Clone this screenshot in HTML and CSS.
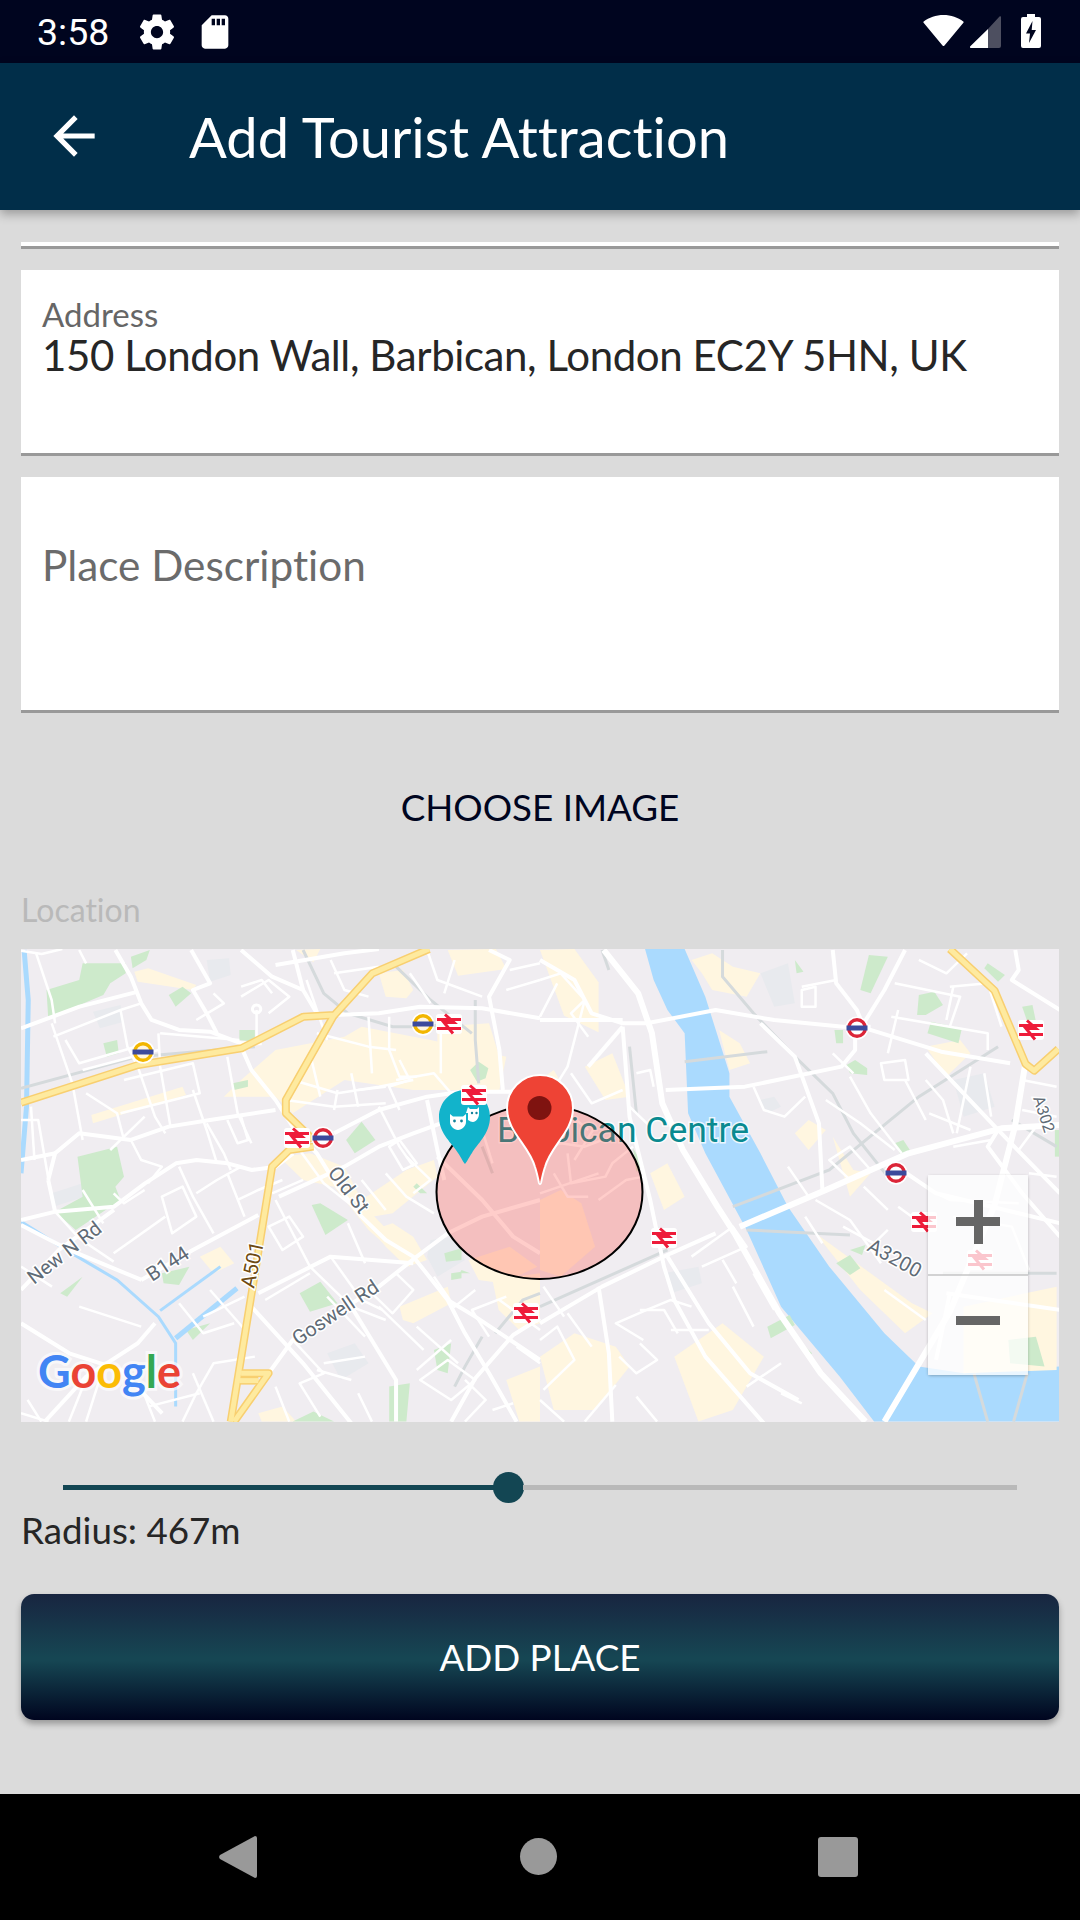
FILE: index.html
```html
<!DOCTYPE html>
<html lang="en">
<head>
<meta charset="utf-8">
<title>Add Tourist Attraction</title>
<link rel="stylesheet" href="styles.css">
</head>
<body>
<div class="phone">
  <header class="status">
    <div class="status-left">
      <span class="time">3:58</span>
      <svg class="ico-gear" viewBox="0 0 24 24"><path d="M19.43 12.98c.04-.32.07-.64.07-.98s-.03-.66-.07-.98l2.11-1.65c.19-.15.24-.42.12-.64l-2-3.46c-.12-.22-.39-.3-.61-.22l-2.49 1c-.52-.4-1.08-.73-1.69-.98l-.38-2.65C14.46 2.18 14.25 2 14 2h-4c-.25 0-.46.18-.49.42l-.38 2.65c-.61.25-1.17.59-1.69.98l-2.49-1c-.23-.09-.49 0-.61.22l-2 3.46c-.13.22-.07.49.12.64l2.11 1.65c-.04.32-.07.65-.07.98s.03.66.07.98l-2.11 1.65c-.19.15-.24.42-.12.64l2 3.46c.12.22.39.3.61.22l2.49-1c.52.4 1.08.73 1.69.98l.38 2.65c.03.24.24.42.49.42h4c.25 0 .46-.18.49-.42l.38-2.65c.61-.25 1.17-.59 1.69-.98l2.49 1c.23.09.49 0 .61-.22l2-3.46c.12-.22.07-.49-.12-.64l-2.11-1.65zM12 15.5c-1.93 0-3.5-1.57-3.5-3.5s1.57-3.5 3.5-3.5 3.5 1.57 3.5 3.5-1.57 3.5-3.5 3.5z"/></svg>
      <svg class="ico-sd" viewBox="0 0 24 24"><path d="M18 2h-8L4.02 8 4 20c0 1.1.9 2 2 2h12c1.1 0 2-.9 2-2V4c0-1.1-.9-2-2-2zm-6 6h-2V4h2v4zm3 0h-2V4h2v4zm3 0h-2V4h2v4z"/></svg>
    </div>
    <div class="status-right">
      <svg class="ico-wifi" viewBox="0 0 41 31"><path d="M19.500 30.500L.6 7.800a1 1 0 0 1 .1-1.300C6 2.500 13 0 20.500 0s14.500 2.500 19.800 6.500a1 1 0 0 1 .1 1.300L21.500 30.500a1.300 1.300 0 0 1-2 0z"/></svg>
      <svg class="ico-signal" viewBox="0 0 31 32"><path class="dim" d="M31 1v29a2 2 0 0 1-2 2H18V13L29.500.5A.9.9 0 0 1 31 1z"/><path d="M18 13v19H1a1 1 0 0 1-.7-1.700z"/></svg>
      <svg class="ico-batt" viewBox="0 0 20 34"><path d="M6 0h8v3h4a2 2 0 0 1 2 2v27a2 2 0 0 1-2 2H2a2 2 0 0 1-2-2V5a2 2 0 0 1 2-2h4z"/><path class="cut" d="M11.500 7L5 19.500h4L8 29l7-13h-4.300z"/></svg>
    </div>
  </header>

  <div class="appbar">
    <svg class="ico-back" viewBox="0 0 24 24"><path d="M20 11H7.830l5.590-5.590L12 4l-8 8 8 8 1.410-1.410L7.830 13H20v-2z"/></svg>
    <h1 class="title">Add Tourist Attraction</h1>
  </div>

  <main class="content">
    <div class="field-stub"></div>
    <div class="field field-address">
      <div class="field-label">Address</div>
      <div class="field-value">150 London Wall, Barbican, London EC2Y 5HN, UK</div>
    </div>
    <div class="field field-desc">
      <div class="placeholder">Place Description</div>
    </div>
    <div class="choose">CHOOSE IMAGE</div>
    <div class="loc-label">Location</div>

    <div class="map">
      <svg class="map-svg" viewBox="21 949 1038 473">
        <defs>
          <g id="rail">
            <rect x="-13" y="-10" width="26" height="20" rx="3" class="halo"/>
            <path class="rail-mark" d="M-12-4.500H12M-12 4.500H12M-4-9.500L5-1.500H-5L4 9.500"/>
          </g>
          <g id="tube-y">
            <circle r="11.500" class="halo"/>
            <circle r="8.300" class="tube-ring-y"/>
            <rect x="-10.500" y="-2.500" width="21" height="5" class="tube-bar"/>
          </g>
          <g id="tube-r">
            <circle r="11.500" class="halo"/>
            <circle r="8.300" class="tube-ring-r"/>
            <rect x="-10.500" y="-2.500" width="21" height="5" class="tube-bar"/>
          </g>
        </defs>
        <rect x="21" y="949" width="1038" height="473" class="m-bg"/>

        <!-- left half, authored in crop coordinates -->
        <g transform="translate(0 940) scale(.3444 .3333)">
          <g class="m-cream">
            <path d="M1100 100l70-10 30 60-20 25-60-5z"/>
            <path d="M390 95l40-10 140 50-10 15-160-25z"/>
            <path d="M265 525l265-85 10 25-270 85z"/>
            <path d="M650 470l50-50 100-90 200-40 50-30 200 40 220 50-20 100-250 0-200-30-150 100-50-50z"/>
            <path d="M1160 1100l140-60 10 50-110 60-30-10z"/>
            <path d="M810 650l90-10 100 40 60 120 140 150-10 30-120-110-100-130-90-20z"/>
            <path d="M1300 30l140-3 30 60-140 20z"/>
            <path d="M1270 260l150-10 30 100-180 30z"/>
            <path d="M860 30l70-3-20 40z"/>
            <path d="M1430 1020l138-20v150l-60 20-60-60z"/>
            <path d="M1470 1320l98-40v165h-60z"/>
            <path d="M1080 870l60-20 60 40 40 70-60 20-60-60z"/>
            <path d="M1050 780l130-90 80-30 10 50-130 110-60 10z"/>
            <path d="M580 950l60-30 40 50-60 30z"/>
            <path d="M1360 960l120-40 80 60-100 50-70-10z"/>
            <path d="M750 1420l70-20 40 45h-100z"/>
          </g>
          <g class="m-grey">
            <path d="M600 60l65-5 5 50-60 20z"/>
            <path d="M270 215l80-20 10 50-70 20z"/>
            <path d="M1250 900l70-10 30 70-80 50-30-60z"/>
            <path d="M950 1240l80-30 40 60-80 50z"/>
            <path d="M150 760l90-30 5 40-90 30z"/>
          </g>
          <g class="m-park">
            <path d="M135 150l95-30 10-50h125v30l-45 30-20 35-160 70z"/>
            <path d="M380 50l55-20-10 30-40 25z"/>
            <path d="M225 650l115-30 20 90-25 30 15 40-130 90-60-55 80-45z"/>
            <path d="M490 165l40-25 25 20-45 40z"/>
            <path d="M300 310l40-10 5 40-35 10z"/>
            <path d="M905 795l25-5 80 50-65 45z"/>
            <path d="M1005 600l45-55 40 55-60 40z"/>
            <path d="M870 1060l60-35 50 65-80 25z"/>
            <path d="M1290 940l50-15v35l-45 5z"/>
            <path d="M1260 1230l50-20-10 90-30-10z"/>
            <path d="M1130 1340l60-10-10 115h-50z"/>
            <path d="M1365 390l25-25 28 20-8 30-25 10z"/>
            <path d="M175 1060l65-50-45 60z"/>
            <path d="M540 1170l70-20-50 50z"/>
            <path d="M695 270h45v35l-45-5z"/>
            <path d="M675 430l45-10v20l-40 10z"/>
            <path d="M470 1000l80-20-30 55-45-5z"/>
            <path d="M1310 1000l30-5v20l-30 5z"/>
            <path d="M1340 990l25 10-30 0z"/>
            <path d="M1210 730l30 30-20 0-20-20z"/>
            <path d="M850 1445l60-30 60 30z"/>
          </g>
          <g class="m-water">
            <path d="M61 845L200 935l140 85 120 110 50 80v190"/>
            <path d="M465 1112L640 980"/>
            <path class="wide" d="M510 1195l178-150"/>
            <path class="wide" d="M70 30l12 150-5 320-16 200"/>
          </g>
          <g class="m-rail-line">
            <path d="M61 445L400 350l340-30"/>
            <path d="M880 30l60 130 70 60 130 40h80l120-10"/>
            <path d="M1380 180v120l10 130"/>
            <path d="M1150 80l100 100 120 100"/>
            <path d="M1400 1190l-50 90-30 60"/>
            <path d="M1568 1060l-50 20-80 100"/>
            <path d="M1430 700l-30-80"/>
          </g>
          <g class="m-road">
            <path d="M61 265l170-65 170-45"/>
            <path d="M335 30l45 80 30 80 30 50 80 30 90 5 90 35h60"/>
            <path d="M555 30l55 100-50 20 40 70 30 60"/>
            <path d="M700 30l90 80 90 40 40 70"/>
            <path d="M850 30l30 120"/>
            <path d="M800 75l200-35 100-13"/>
            <path d="M970 225l130-5 120-20 180 5 168 30"/>
            <path d="M700 320l30 70 70 90 50 80 70 80 60 100 70 90 70 70 80 50 100 130 50 100 70 120 80 145"/>
            <path d="M970 580l130-70 140-40 100-15h228"/>
            <path d="M140 720l20-80 70-60 150 20 110-40 120-20 190-30"/>
            <path d="M61 660l100-20"/>
            <path d="M160 815l-20-95"/>
            <path d="M61 840l100-25 170-15 90-70 90-60 60-10 90 10 70 20 70-10 50-40"/>
            <path d="M810 770l190-90 100-60 100-40 80-30"/>
            <path d="M61 1050l110-120 160-120"/>
            <path d="M61 855l140 75 210 90"/>
            <path d="M410 1020l150-90 190-105"/>
            <path d="M61 1150l140 90 150 50 120 130"/>
            <path d="M750 1060l210-110 240 20"/>
            <path d="M780 1300l70-100 250-160 110-90 90-70 100-50 168-50"/>
            <path d="M1020 1100l130 220v125"/>
            <path d="M1240 480l30 150 20 90"/>
            <path d="M1420 30l60 30-60 110 30 160 10 120"/>
            <path d="M1300 1080l80 50 188 130"/>
            <path d="M1310 1445l70-130 110-130 78-50"/>
            <path d="M730 1100l150 170 140 180"/>
            <path d="M450 1150l-50 60-150 100-120 135"/>
            <path d="M1270 650l130 130 90 110 78 50"/>
          </g>
          <g class="m-road thin">
            <path d="M105 40l45 140 10 70"/>
            <path d="M61 32l60 10 60-15"/>
            <path d="M230 30l20 40"/>
            <path d="M150 250l30 90 30 90 30 170"/>
            <path d="M190 300l40 70 200-60"/>
            <path d="M155 290l195-80 60-20"/>
            <path d="M350 210l20 110 30 60 50 150 30 50"/>
            <path d="M460 280l5 100 30 180"/>
            <path d="M465 280l230 20"/>
            <path d="M240 390l220-60"/>
            <path d="M620 160l30 30-80 50"/>
            <path d="M700 170l80-50 60 50-60 50"/>
            <path d="M745 210v90"/>
            <path d="M660 350l30 170 40 90"/>
            <path d="M360 420l200-50 20 90-230 60"/>
            <path d="M560 450l40 120 30 100"/>
            <path d="M660 540l30 70 30-10-20-70"/>
            <path d="M600 550l50 90 20 50"/>
            <path d="M830 480l140 20 150-10"/>
            <path d="M850 420l130 40 120-20 100-20"/>
            <path d="M900 340l30 130"/>
            <path d="M980 450l-10 60"/>
            <path d="M1020 400l20 100"/>
            <path d="M1070 230l10 170"/>
            <path d="M1130 230v100l30 80 50 0"/>
            <path d="M1150 330l-80-10-150-40"/>
            <path d="M1100 500l60 120 40 60"/>
            <path d="M1130 620l30-20 50 70-40 20z"/>
            <path d="M380 600l30 60 60 20-40 50"/>
            <path d="M520 680l40 90 60 110"/>
            <path d="M470 770l30 110 70-50-40-90z"/>
            <path d="M570 760l60-40 70-40"/>
            <path d="M660 700l50 130"/>
            <path d="M690 780l60-30 70-30"/>
            <path d="M160 815l70 80 100 70"/>
            <path d="M330 760l30 30 60-40"/>
            <path d="M330 940l150-110"/>
            <path d="M800 780l100 200 120 120 100 40"/>
            <path d="M900 1000l-130 80"/>
            <path d="M1010 850l50 120"/>
            <path d="M960 950l90 130 60 30"/>
            <path d="M780 860l60-30 40 60-60 40z"/>
            <path d="M850 1200l90 100-70 30 60 100"/>
            <path d="M1060 1250l-120 20"/>
            <path d="M1150 1000l50 50-60 70-60-60"/>
            <path d="M1220 1320l80-60 80 60-70 60z"/>
            <path d="M1260 1010l60 90 60-50"/>
            <path d="M1420 1190l-50-80 100-40"/>
            <path d="M1430 1410l60-20"/>
            <path d="M1160 360l30 60-60 20 30 70"/>
            <path d="M1040 450l80-10"/>
            <path d="M1280 270v130"/>
            <path d="M1350 1320l60 60-60 65"/>
            <path d="M590 1130l120-60"/>
            <path d="M740 1250l-120 20-50 90-40 85"/>
            <path d="M410 1340l40 105"/>
            <path d="M250 1445l40-130"/>
            <path d="M80 1380l40 65"/>
            <path d="M61 1420l80 25"/>
            <path d="M1180 650l70 70-50 40"/>
            <path d="M890 120l60 180"/>
            <path d="M960 60l40 90 70 20"/>
            <path d="M970 100l130-20"/>
            <path d="M700 140l60-20 30 40"/>
            <path d="M1190 100l60 90"/>
            <path d="M1240 30l30 90 130 50"/>
            <path d="M1320 60l-30 100"/>
            <path d="M1480 90l88-20"/>
            <path d="M1470 150l98-30"/>
            <path d="M1150 420l110-20 50 60"/>
            <path d="M1280 500l120 70 30 100"/>
            <path d="M1300 600l100-20"/>
            <path d="M1120 700l60 70 80 50"/>
            <path d="M1050 720l70 90"/>
            <path d="M870 630l70 100 110 90"/>
            <path d="M880 720l-90 40"/>
            <path d="M950 1070l110 120"/>
            <path d="M1210 1160l120 110"/>
            <path d="M1100 1100l130 130"/>
            <path d="M1310 1200l-100 90"/>
            <path d="M1450 1080l118 90"/>
            <path d="M1500 1220l68 50"/>
            <path d="M520 1090l70 90 90-30"/>
            <path d="M610 1050l110 130"/>
            <path d="M230 1100l180 60"/>
            <path d="M61 980l90 60"/>
            <path d="M260 1290l-60 155"/>
            <path d="M560 1300l60 145"/>
            <path d="M430 1400l150-40"/>
            <path d="M800 1340l40 105"/>
            <path d="M920 1290l100 30"/>
            <path d="M1040 1360l40 85"/>
            <path d="M240 750l60 100"/>
            <path d="M420 530l-100 100"/>
            <path d="M250 460l90 60 20 80"/>
            <path d="M61 540h50l30 180"/>
            <path d="M90 500l10 160"/>
          </g>
          <g class="m-hwy-under">
            <path d="M61 488l340-113 300-50 180-95 90-5 110-125 165-73"/>
            <path d="M970 225L830 480v40l80 80"/>
            <path d="M910 620l-70 10-50 50-50 320-70 445"/>
            <path d="M700 1300h80l-100 145"/>
            <path d="M695 1322h55"/>
          </g>
          <g class="m-hwy">
            <path d="M61 488l340-113 300-50 180-95 90-5 110-125 165-73"/>
            <path d="M970 225L830 480v40l80 80"/>
            <path d="M910 620l-70 10-50 50-50 320-70 445"/>
            <path d="M700 1300h80l-100 145"/>
            <path d="M695 1322h55"/>
          </g>
          <path class="m-halo-road" d="M745 195a12 12 0 1 0 .1 0z"/>
        </g>

        <!-- right half -->
        <g transform="translate(540 940) scale(.3444 .3333)">
          <path class="m-river" d="M305 27H420l60 143 70 230v70l90 170 80 160 120 180 160 200 100 100 130 20 277-20V1445H970L870 1310 700 1100 600 870 480 640 430 520 420 280 370 210 330 120z"/>
          <g class="m-cream">
            <path d="M440 60l60-20 60 40 80 20-40 70-100-20-30-50z"/>
            <path d="M520 270l60 40 30 60-60 20z"/>
            <path d="M740 580l40-40 50 30-50 60z"/>
            <path d="M0 30l100-3 70 100 0 150-100-50z"/>
            <path d="M130 380l80-40 50 130-70 10z"/>
            <path d="M0 780l60-30 60 40 40 130-100 90-60-20z"/>
            <path d="M320 700l50-30 50 100-60 40z"/>
            <path d="M800 880l120 90 160 120 60 30-80 60-130-130z"/>
            <path d="M0 1250l100-70 120 40 40 60-100 130H40z"/>
            <path d="M390 1250l140-100 120 100-90 160-100 35z"/>
            <path d="M850 590l60 100 50 10-60 70z"/>
            <path d="M1120 320l100-20 30 40-70 70z"/>
            <path d="M1230 1100l270-60v250l-270 10z"/>
            <path d="M0 420l40-30 50 90z"/>
          </g>
          <g class="m-grey">
            <path d="M640 100l80-30 20 120-60 10z"/>
            <path d="M1200 420l90-20 30 100-90 30z"/>
            <path d="M360 1000l100-20 10 50-90 30z"/>
            <path d="M640 480l40-10 20 30-40 20z"/>
          </g>
          <g class="m-park">
            <path d="M955 45l55 5-50 110-30-10z"/>
            <path d="M1100 165l45-10 25 40-50 30-25 0z"/>
            <path d="M1135 245l90 20-10 45-90-30z"/>
            <path d="M890 375l25-15 35 25v20l-50-5z"/>
            <path d="M1030 610l25-10 25 40-30 10z"/>
            <path d="M660 1160l65-35 15 30-70 40z"/>
            <path d="M860 970l40-25 30 40-30 20z"/>
            <path d="M900 930l45-15-10 30z"/>
            <path d="M740 60l25 35-20 5z"/>
            <path d="M740 1190l50 50-10 10-40-50z"/>
            <path d="M1400 200l30-5 10 50-25 0z"/>
            <path d="M1300 70l50 35-20 20-40-40z"/>
            <path d="M1360 1200l80-10 25 90-100-10z"/>
            <path d="M270 625l30 50-20 20z"/>
            <path d="M1495 570h12v80h-12z"/>
            <path d="M855 270l25 0 0 40-20 0z"/>
          </g>
          <g class="m-rail-line">
            <path d="M530 30v80l90 110 120 130 110 110 60 120 100 130"/>
            <path d="M560 800L840 690l260-220 230-150"/>
            <path d="M420 365l240-30"/>
            <path d="M600 870l300 15"/>
            <path d="M1370 540l130 80"/>
            <path d="M180 30l20 60"/>
            <path d="M260 320l20 200"/>
            <path d="M0 1100L370 930"/>
            <path d="M1170 1000h330"/>
            <path d="M1260 1300l40 145M1415 1300l-40 145"/>
          </g>
          <g class="m-road">
            <path d="M0 60l100 60 50 100 90 30 70 0 200-40 170 30 200 20h80"/>
            <path class="wide" d="M185 30l100 130 40 120 30 210 60 140 100 170 50 80 130 240 120 180 130 145"/>
            <path d="M240 260l20 270 60 250 40 200 30 100 90 170 170 200"/>
            <path d="M0 240h240"/>
            <path d="M140 380L240 260"/>
            <path d="M365 450l230-10 280-60 40-50 0-50"/>
            <path class="wide" d="M580 860l250-110 240-110 270-75 170-10"/>
            <path class="wide" d="M1000 1445l190-330 130-320 60-240 30-190"/>
            <path d="M945 265l220 70 200 35"/>
            <path d="M1120 340l210 230 180 190"/>
            <path d="M1330 570l-30 50 100 140 110 130"/>
            <path d="M1050 690l100 70 360 90"/>
            <path d="M1180 1060l330 50"/>
            <path d="M640 250l100 100 70 200 10 200"/>
            <path d="M0 1150l180-110 200-100 130-60"/>
            <path d="M170 1040l30 200 10 205"/>
            <path d="M370 950l120 200 120 150 140 80"/>
            <path d="M1190 1060l-40 200"/>
            <path d="M850 30l10 100 60 80 20 50"/>
            <path d="M1060 30l-60 120-60 100"/>
            <path d="M1380 30l10 60-20 30 140 90"/>
          </g>
          <g class="m-road thin">
            <path d="M0 120l60-20 70 80-40 40 50 70"/>
            <path d="M130 180l-50 200-60 100"/>
            <path d="M760 150l40-10v60h-40z"/>
            <path d="M860 120l-100 20"/>
            <path d="M1030 130l190 40-30 90"/>
            <path d="M1190 140l110-10 40 130"/>
            <path d="M1040 210l-30 130"/>
            <path d="M1020 230l280 50 0 50"/>
            <path d="M990 370l70-10 10 60-70 0z"/>
            <path d="M1120 420l50 60 30 100"/>
            <path d="M900 410l60 110 90 120"/>
            <path d="M830 480l100 70 100 80"/>
            <path d="M840 660l60-40 60 70-60 30z"/>
            <path d="M800 780l100 60 90 130"/>
            <path d="M620 440l30 70 60 20 60-60"/>
            <path d="M1200 620l110-20"/>
            <path d="M1250 380l-40 200"/>
            <path d="M1400 420l100 20"/>
            <path d="M1400 510l100 20"/>
            <path d="M440 950l120-90 40 60-130 60"/>
            <path d="M530 960l40 70"/>
            <path d="M440 1100l-60-20-70 30-90 40 80 50"/>
            <path d="M290 1110l70 0 40 70"/>
            <path d="M0 1200l50-40 50 100-90 90"/>
            <path d="M290 1210l50 50-60 40-50-50"/>
            <path d="M600 1340l100-70"/>
            <path d="M700 1360l60 30"/>
            <path d="M130 1445l90-110"/>
            <path d="M380 1170l110 0"/>
            <path d="M170 780l80-60 50-10"/>
            <path d="M80 640l10 90 100-20 20-40 60-50"/>
            <path d="M0 760l170-60"/>
            <path d="M0 630l60-20 70 10 50-20"/>
            <path d="M40 700l40 70 60 0"/>
            <path d="M280 400l40-10 10 50"/>
            <path d="M1130 750l60 30 200 10"/>
            <path d="M1200 830l170 30 50 130"/>
            <path d="M1000 1050l120 90"/>
            <path d="M850 340l60 60"/>
            <path d="M0 230l50-100"/>
            <path d="M90 400l60 90 90-40"/>
            <path d="M60 500l80 70"/>
            <path d="M160 560l-60 100"/>
            <path d="M260 500l60 60"/>
            <path d="M10 1040l60 90"/>
            <path d="M80 1120l70 100"/>
            <path d="M0 1380l70 65"/>
            <path d="M280 1370l60 75"/>
            <path d="M1130 520l120 50"/>
            <path d="M1060 420l60 120"/>
            <path d="M1200 140l-20 100"/>
            <path d="M1100 60l80 40 60-60"/>
            <path d="M880 860l90 50 40-40"/>
            <path d="M720 680l60 90"/>
            <path d="M770 830l50 80"/>
            <path d="M940 740l70 70"/>
            <path d="M1040 800l80 60"/>
            <path d="M1290 400l20 130"/>
            <path d="M1440 560l-50 70"/>
            <path d="M1420 700l80 10"/>
            <path d="M560 1040l60 120"/>
            <path d="M620 1000l60 110"/>
          </g>
          <g class="m-hwy-under"><path d="M1190 27l130 125 90 220 25 20 70-65"/></g>
          <g class="m-hwy"><path d="M1190 27l130 125 90 220 25 20 70-65"/></g>
        </g>

        <use href="#tube-y" x="143" y="1052"/>
        <use href="#tube-y" x="423" y="1024"/>
        <use href="#rail" x="449" y="1024"/>
        <use href="#rail" x="297" y="1138"/>
        <use href="#tube-r" x="323" y="1138"/>
        <use href="#rail" x="526" y="1313"/>
        <use href="#rail" x="664" y="1238"/>
        <use href="#tube-r" x="857" y="1028"/>
        <use href="#tube-r" x="896" y="1173"/>
        <use href="#rail" x="924" y="1222"/>
        <use href="#rail" x="1031" y="1030"/>
        <use href="#rail" x="980" y="1260"/>

        <text class="lbl" transform="translate(34 1285) rotate(-38)">New N Rd</text>
        <text class="lbl" transform="translate(152 1282) rotate(-33)">B144</text>
        <text class="lbl lbl-a" transform="translate(254 1289) rotate(-78)">A501</text>
        <text class="lbl" transform="translate(298 1346) rotate(-34)">Goswell Rd</text>
        <text class="lbl" transform="translate(327 1173) rotate(52)">Old St</text>
        <text class="lbl" transform="translate(866 1250) rotate(29)">A3200</text>
        <text class="lbl lbl-s" transform="translate(1033 1098) rotate(72)">A302</text>

        <text class="poi" x="497" y="1142">Barbican Centre</text>

        <ellipse class="radius" cx="539.500" cy="1192" rx="103" ry="87"/>

        <path class="pin-teal" d="M465 1090c-14 0-26 12-26 27 0 17 14 27 19 36 3 4 5 9 7 11 2-2 4-7 7-11 5-9 18-19 18-36 0-15-11-27-25-27z"/>
        <path class="pin-face" d="M450 1114l3 2.500h10l3-2.500v8c0 4-4 8-8 8s-8-4-8-8z"/>
        <path class="pin-face" d="M468 1107l2 2h7l2-2v7c0 4-3 8-6 8-2 0-3-1-5-2v-7h-2z"/>
        <circle class="pin-eye" cx="454.500" cy="1121" r="1.400"/>
        <circle class="pin-eye" cx="461.500" cy="1121" r="1.400"/>
        <circle class="pin-eye" cx="472" cy="1113" r="1.200"/>
        <circle class="pin-eye" cx="476.500" cy="1113" r="1.200"/>
        <use href="#rail" x="474" y="1095"/>

        <path class="pin-red" d="M540 1075c-18.500 0-33 15-33 33 0 24 22 37 28 59 2 6 3 11 4 16 .5 1.500 1.500 1.500 2 0 1-5 2-10 4-16 6-22 28-35 28-59 0-18-14.500-33-33-33z"/>
        <circle class="pin-dot" cx="539.500" cy="1108" r="12"/>

        <text class="goog" x="38" y="1388"><tspan class="g-b">G</tspan><tspan class="g-r">o</tspan><tspan class="g-y">o</tspan><tspan class="g-b">g</tspan><tspan class="g-g">l</tspan><tspan class="g-r">e</tspan></text>
      </svg>
      <div class="zoom-ctl">
        <div class="zoom-btn"><span class="plus"></span></div>
        <div class="zoom-btn zoom-btn-minus"><span class="minus"></span></div>
      </div>
    </div>

    <div class="slider">
      <div class="track-on"></div>
      <div class="thumb"></div>
      <div class="track-off"></div>
    </div>
    <div class="radius-label">Radius: 467m</div>
    <button class="add-btn">ADD PLACE</button>
  </main>

  <footer class="navbar">
    <svg class="nav-back" viewBox="0 0 38 42"><path d="M36 0a2 2 0 0 1 2 2v38a2 2 0 0 1-2 2L1 23a3 3 0 0 1 0-4z"/></svg>
    <span class="nav-home"></span>
    <span class="nav-recent"></span>
  </footer>
</div>
</body>
</html>
```

FILE: styles.css
```css
* { box-sizing: border-box; }
html, body { margin: 0; padding: 0; }
body { font-family: "Lato", "Liberation Sans", sans-serif; background: #dbdbdb; font-variant-ligatures: none; }
.phone { width: 1080px; height: 1920px; display: flex; flex-direction: column; overflow: hidden; background: #dbdbdb; }

/* status bar */
.status { height: 63px; flex: none; background: #00051f; display: flex; justify-content: space-between; align-items: center; padding: 0 39px 0 37px; fill: #fff; color: #fff; }
.status-left, .status-right { display: flex; align-items: center; }
.time { font-family: "Roboto", sans-serif; font-size: 37.500px; font-weight: 400; width: 82px; }
.ico-gear { width: 42px; height: 42px; margin-left: 17px; }
.ico-sd { width: 40px; height: 40px; margin-left: 17px; }
.ico-wifi { width: 41px; height: 31px; margin-right: 6px; margin-top: -3px; }
.ico-signal { width: 31px; height: 32px; margin-right: 20px; }
.ico-batt { width: 20px; height: 34px; margin-top: -1px; }
.dim { fill: #4d4f60; }
.cut { fill: #00051f; }

/* app bar */
.appbar { height: 147px; flex: none; background: #012e49; display: flex; align-items: center; padding-left: 43px; box-shadow: 0 4px 10px rgba(0,0,0,.3); position: relative; z-index: 1; }
.ico-back { width: 62px; height: 62px; fill: #fff; flex: none; margin-top: -1px; }
.title { margin: 0 0 0 84px; font-size: 56px; font-weight: 400; color: #fff; }

/* content */
.content { flex: 1; display: flex; flex-direction: column; padding: 32px 21px 0; min-height: 0; }
.field-stub { height: 7px; background: #fff; border-bottom: 3px solid #999; flex: none; }
.field { background: #fff; border-bottom: 3px solid #999; flex: none; padding-left: 21px; }
.field-address { height: 186px; margin-top: 21px; padding-top: 25px; }
.field-desc { height: 236px; margin-top: 21px; padding-top: 63px; }
.field-label { font-size: 33px; line-height: 38px; color: #666; }
.field-value { font-size: 42px; letter-spacing: -.4px; line-height: 44px; color: #262626; }
.placeholder { font-size: 42.300px; line-height: 50px; color: #6b6b6b; }
.choose { margin-top: 71px; height: 46px; line-height: 46px; font-size: 36.750px; text-align: center; color: #00051f; flex: none; }
.loc-label { margin-top: 60px; height: 40px; line-height: 40px; font-size: 32px; color: #b9b9b9; flex: none; }

/* map */
.map { position: relative; margin-top: 19px; height: 473px; flex: none; overflow: hidden; }
.map-svg { display: block; width: 1038px; height: 473px; }
.m-bg { fill: #f0edf1; }
.m-cream path { fill: #fff6e0; }
.m-grey path { fill: #e8eaee; }
.m-park path { fill: #cdeacb; }
.m-river { fill: #aadafe; }
.m-water path { fill: none; stroke: #aadafe; stroke-width: 3px; vector-effect: non-scaling-stroke; }
.m-water .wide { stroke-width: 5px; }
.m-rail-line path { fill: none; stroke: #d5dadc; stroke-width: 3px; vector-effect: non-scaling-stroke; }
.m-road path { fill: none; stroke: #fff; stroke-width: 4px; stroke-linejoin: round; vector-effect: non-scaling-stroke; }
.m-road .wide { stroke-width: 6px; }
.m-road.thin path { stroke-width: 2.500px; }
.m-hwy-under path { fill: none; stroke: #f8cf70; stroke-width: 8px; stroke-linejoin: round; vector-effect: non-scaling-stroke; }
.m-hwy path { fill: none; stroke: #feea9f; stroke-width: 5px; stroke-linejoin: round; vector-effect: non-scaling-stroke; }
.m-halo-road { fill: none; stroke: #fff; stroke-width: 3px; vector-effect: non-scaling-stroke; }
.halo { fill: #fff; }
.rail-mark { fill: none; stroke: #ee1c3a; stroke-width: 3px; }
.tube-ring-y { fill: #fff6e0; stroke: #f2b600; stroke-width: 3.500px; }
.tube-ring-r { fill: #fff; stroke: #dc2538; stroke-width: 3.500px; }
.tube-bar { fill: #3c4a9c; }
.lbl { font-family: "Roboto", sans-serif; font-size: 20px; fill: #5f6b76; stroke: #fff; stroke-width: 3px; paint-order: stroke; }
.lbl-a { fill: #6e4a12; }
.lbl-s { font-size: 16px; }
.poi { font-family: "Roboto", sans-serif; font-size: 35.500px; fill: #0a8a90; stroke: #fff; stroke-width: 3px; stroke-opacity: .8; paint-order: stroke; }
.pin-teal { fill: #12b3cb; }
.pin-face { fill: #fff; }
.pin-eye { fill: #12829a; }
.radius { fill: rgba(255,60,50,.26); stroke: #000; stroke-width: 2px; }
.pin-red { fill: #ee4335; stroke: #fff; stroke-width: 2px; }
.pin-dot { fill: #7f1310; }
.goog { font-family: "Lato", sans-serif; font-size: 45px; font-weight: 700; stroke: #fff; stroke-width: 6px; stroke-opacity: .6; paint-order: stroke; }
.g-b { fill: #4285f4; }
.g-r { fill: #ea4335; }
.g-y { fill: #fbbc05; }
.g-g { fill: #34a853; }

.zoom-ctl { position: absolute; left: 907px; top: 226px; width: 100px; height: 200px; border-radius: 3px; box-shadow: 0 1px 3px rgba(0,0,0,.25); display: flex; flex-direction: column; }
.zoom-btn { flex: 1; background: rgba(255,255,255,.75); display: flex; align-items: center; justify-content: center; }
.zoom-btn-minus { border-top: 2px solid rgba(170,170,170,.5); }
.plus { position: relative; display: block; width: 44px; height: 44px; background: linear-gradient(#666,#666) center / 100% 9px no-repeat, linear-gradient(#666,#666) center / 9px 100% no-repeat; margin-top: -6px; }
.minus { display: block; width: 44px; height: 9px; background: #666; margin-top: -10px; }

/* slider */
.slider { flex: none; height: 32px; margin: 49px 42px 0; display: flex; align-items: center; }
.track-on { width: 431px; height: 5px; background: #134653; }
.thumb { width: 31px; height: 31px; border-radius: 50%; background: #134653; flex: none; margin: 0 -1px; }
.track-off { flex: 1; height: 5px; background: #b9b9b9; }
.radius-label { flex: none; margin-top: 7px; font-size: 36.750px; line-height: 40px; color: #262626; }

/* button */
.add-btn { flex: none; margin-top: 44px; height: 126px; width: 100%; border: 0; border-radius: 13px; padding: 0; font-family: inherit; font-size: 36.750px; color: #fff; background: linear-gradient(#182540 0%, #164653 50%, #164653 53%, #00051f 100%); box-shadow: 0 4px 6px rgba(0,0,0,.3); }

/* nav bar */
.navbar { height: 126px; flex: none; background: #000; position: relative; }
.nav-back { position: absolute; left: 219px; top: 42px; width: 38px; height: 42px; fill: #999; }
.nav-home { position: absolute; left: 520px; top: 44px; width: 37px; height: 37px; border-radius: 50%; background: #999; }
.nav-recent { position: absolute; left: 818px; top: 43px; width: 40px; height: 40px; border-radius: 3px; background: #999; }
```
